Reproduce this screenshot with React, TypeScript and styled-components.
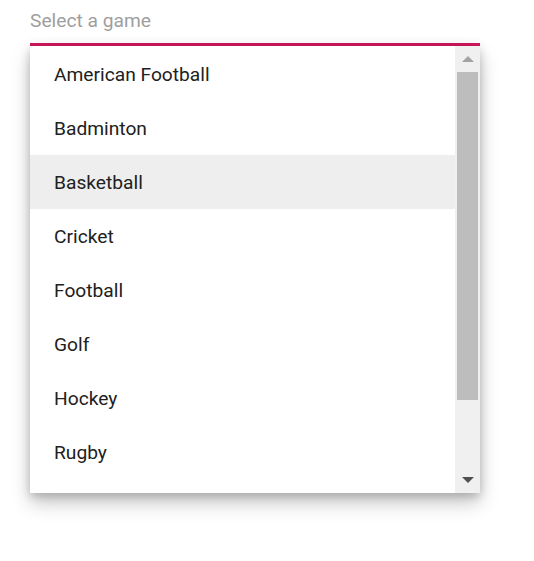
import React from "react";
import styled, { createGlobalStyle } from "styled-components";

const GlobalStyle = createGlobalStyle`
  html, body {
    margin: 0;
    padding: 0;
    background: #fff;
  }
  body {
    font-family: Roboto, "Noto Sans", "Liberation Sans", sans-serif;
  }
`;

const Page = styled.div`
  padding: 0 54px 40px 30px;
  width: 450px;
`;

const Field = styled.div`
  height: 43px;
  display: flex;
  align-items: center;
  border-bottom: 3px solid #d3185e;
  font-size: 19.2px;
  color: #9e9e9e;
`;

const Placeholder = styled.span`
  margin-top: -3px;
`;

const Popup = styled.div`
  display: flex;
  height: 447px;
  background: #fff;
  box-shadow: 0 10px 18px rgba(0, 0, 0, 0.22), 0 4px 8px rgba(0, 0, 0, 0.12),
    0 0 12px rgba(0, 0, 0, 0.08);
`;

const List = styled.ul`
  flex: 1;
  list-style: none;
  margin: 0;
  padding: 1px 0 0;
  overflow: hidden;
`;

const Item = styled.li<{ $active?: boolean }>`
  height: 54px;
  display: flex;
  align-items: center;
  padding-left: 24px;
  font-size: 19.2px;
  color: #212121;
  background: ${(p) => (p.$active ? "#eeeeee" : "transparent")};
`;

const Scrollbar = styled.div`
  width: 25px;
  display: flex;
  flex-direction: column;
  background: #f0f0f0;
`;

const ArrowButton = styled.div<{ $down?: boolean; $disabled?: boolean }>`
  height: 26px;
  display: flex;
  align-items: center;
  justify-content: center;

  &::after {
    content: "";
    width: 0;
    height: 0;
    border-left: 6px solid transparent;
    border-right: 6px solid transparent;
    ${(p) =>
      p.$down
        ? `border-top: 6px solid ${p.$disabled ? "#a3a3a3" : "#505050"};`
        : `border-bottom: 6px solid ${p.$disabled ? "#a3a3a3" : "#505050"};`}
  }
`;

const Track = styled.div`
  flex: 1;
  padding: 0 2px;
`;

const Thumb = styled.div`
  background: #bdbdbd;
  height: 328px;
`;

const games = [
  "American Football",
  "Badminton",
  "Basketball",
  "Cricket",
  "Football",
  "Golf",
  "Hockey",
  "Rugby",
];

export default function App() {
  return (
    <>
      <GlobalStyle />
      <Page>
        <Field>
          <Placeholder>Select a game</Placeholder>
        </Field>
        <Popup>
          <List>
            {games.map((g) => (
              <Item key={g} $active={g === "Basketball"}>
                {g}
              </Item>
            ))}
          </List>
          <Scrollbar>
            <ArrowButton $disabled />
            <Track>
              <Thumb />
            </Track>
            <ArrowButton $down />
          </Scrollbar>
        </Popup>
      </Page>
    </>
  );
}
